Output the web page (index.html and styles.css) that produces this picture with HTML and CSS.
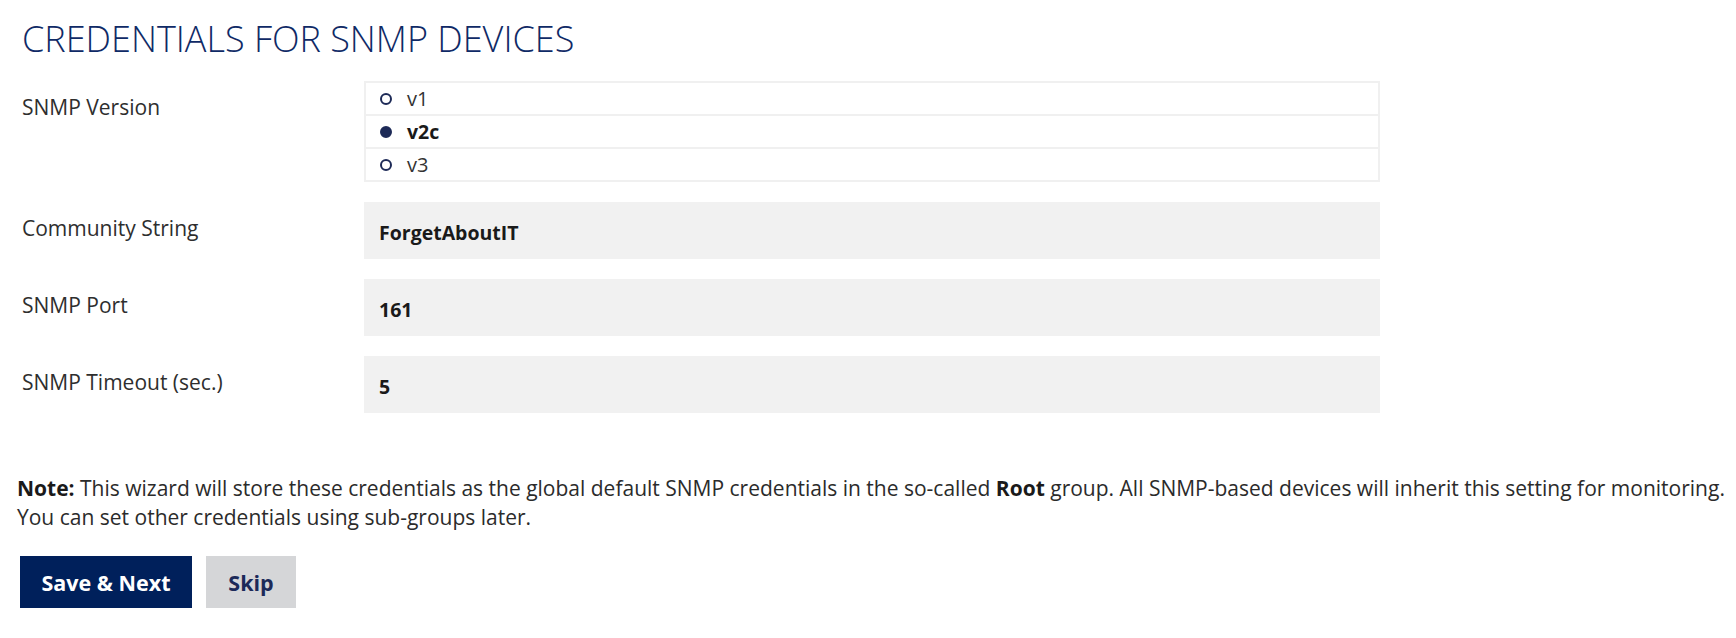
FILE: index.html
```html
<!DOCTYPE html>
<html lang="en">
<head>
<meta charset="utf-8">
<title>Credentials for SNMP Devices</title>
<link rel="stylesheet" href="styles.css">
</head>
<body>
<div class="page">
  <h1 class="title">CREDENTIALS FOR SNMP DEVICES</h1>
  <div class="form">
    <div class="label">SNMP Version</div>
    <div class="radios">
      <div class="radio"><span class="dot"></span><span class="opt">v1</span></div>
      <div class="radio selected"><span class="dot"></span><span class="opt">v2c</span></div>
      <div class="radio"><span class="dot"></span><span class="opt">v3</span></div>
    </div>

    <div class="label">Community String</div>
    <div class="input">ForgetAboutIT</div>

    <div class="label">SNMP Port</div>
    <div class="input">161</div>

    <div class="label">SNMP Timeout (sec.)</div>
    <div class="input">5</div>
  </div>

  <p class="note"><b>Note:</b> This wizard will store these credentials as the global default SNMP credentials in the so-called <b>Root</b> group. All SNMP-based devices will inherit this setting for monitoring.<br>You can set other credentials using sub-groups later.</p>

  <div class="buttons">
    <button class="btn primary">Save &amp; Next</button>
    <button class="btn secondary">Skip</button>
  </div>
</div>
</body>
</html>
```

FILE: styles.css
```css
html, body {
  margin: 0;
  padding: 0;
  background: #ffffff;
}

body {
  font-family: "Open Sans", "Noto Sans", "Liberation Sans", sans-serif;
  color: #2b2b2b;
  font-size: 21px;
}

.page {
  padding: 0 0 0 17px;
}

.title {
  margin: 0 0 0 5px;
  padding-top: 19px;
  height: 81px;
  box-sizing: border-box;
  font-weight: 300;
  font-size: 36px;
  line-height: 40px;
  color: #0f2a66;
  letter-spacing: 0;
}

.form {
  display: grid;
  grid-template-columns: 342px 1016px;
  row-gap: 20px;
  margin-left: 5px;
}

.label {
  padding-top: 12px;
  line-height: 28px;
  color: #2e2e2e;
}

.radios {
  border: 2px solid #f0f0f0;
  display: flex;
  flex-direction: column;
}

.radio {
  height: 31px;
  display: flex;
  align-items: center;
  padding-left: 14px;
  line-height: 31px;
  font-size: 20px;
  color: #333;
}

.radio + .radio {
  border-top: 2px solid #f0f0f0;
}

.dot {
  width: 8px;
  height: 8px;
  border: 2px solid #1d2a57;
  border-radius: 50%;
  background: #fff;
  margin-right: 15px;
  flex: none;
}

.radio.selected .dot {
  background: #1d2a57;
}

.radio.selected .opt {
  font-weight: 700;
  font-size: 19.5px;
  color: #1a1a1a;
}

.input {
  height: 57px;
  box-sizing: border-box;
  background: #f1f1f1;
  padding: 16px 15px 0;
  line-height: 30px;
  font-size: 19.5px;
  font-weight: 700;
  color: #1a1a1a;
}

.note {
  margin: 61px 0 0 0;
  line-height: 29px;
  font-size: 21px;
  white-space: nowrap;
  color: #2b2b2b;
}

.note b {
  font-weight: 700;
  color: #1a1a1a;
}

.buttons {
  display: flex;
  gap: 14px;
  margin: 24px 0 0 3px;
}

.btn {
  height: 52px;
  border: none;
  font-family: "Open Sans", "Noto Sans", "Liberation Sans", sans-serif;
  font-size: 21.5px;
  font-weight: 700;
  padding: 0;
  cursor: pointer;
}

.btn.primary {
  width: 172px;
  background: #00205b;
  color: #ffffff;
}

.btn.secondary {
  width: 90px;
  background: #d5d6d8;
  color: #1c2a59;
}
```
